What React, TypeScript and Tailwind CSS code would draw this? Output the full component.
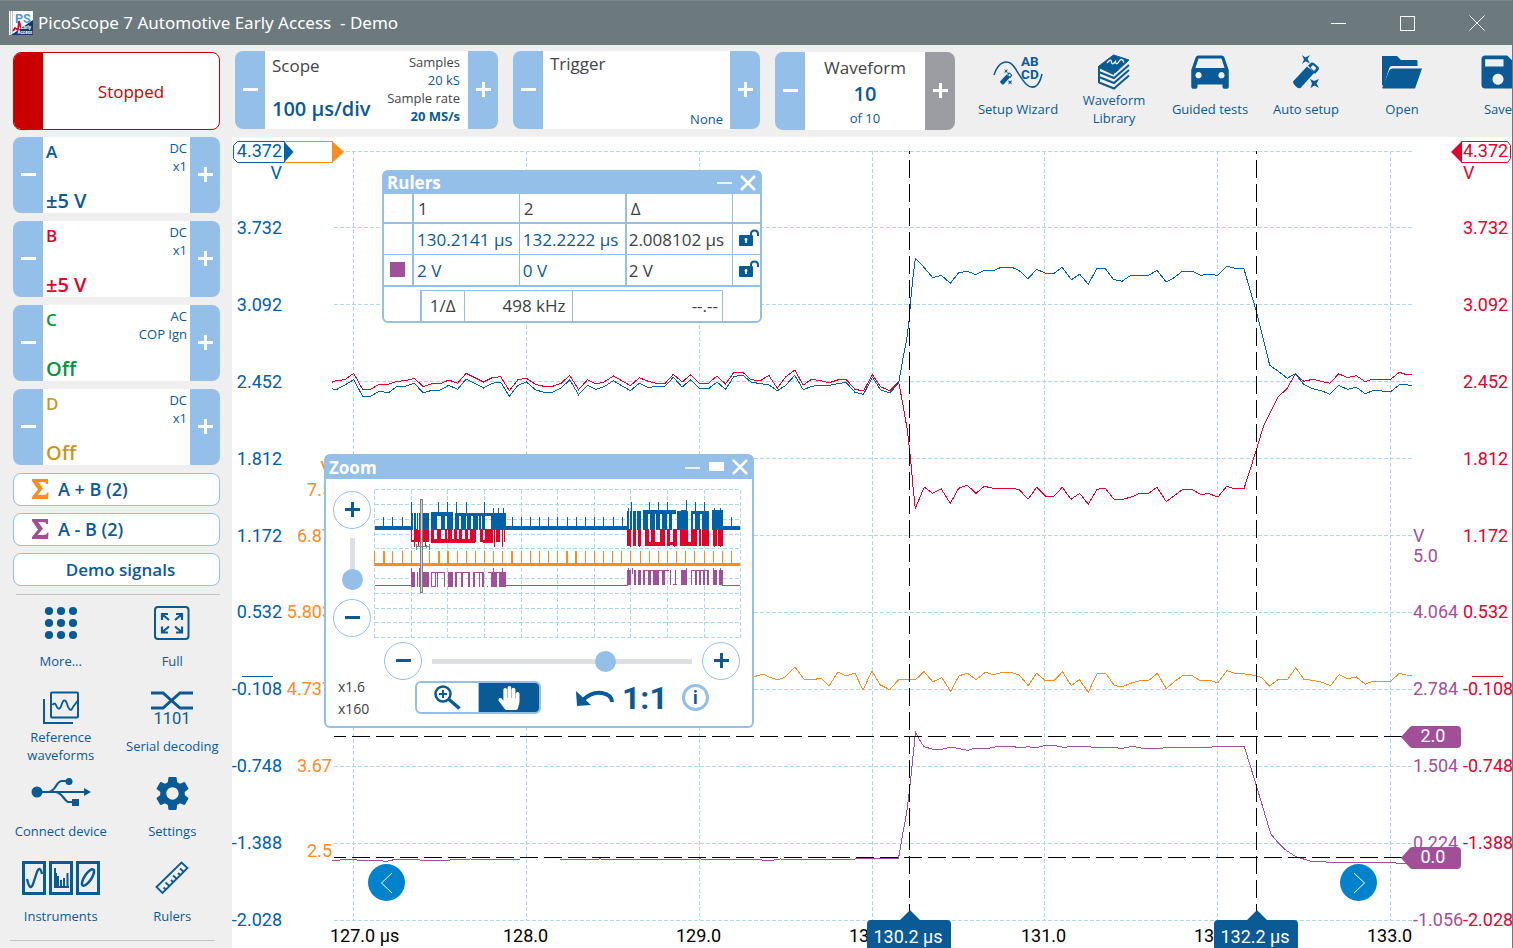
import React from "react";
import { MdDirectionsCar, MdSave, MdSettings } from "react-icons/md";
import { FaHandPaper } from "react-icons/fa";

type Pt = [number, number];

const parse = (s: string): Pt[] => s.trim().split(/\s+/).map((p) => p.split(",").map(Number) as Pt);

/** Converts raw samples to chart coordinates. */
const plot = (s: string, ox: number, oy: number, sx: number, sy: number) =>
  parse(s)
    .map(([x, y]) => `${(ox + x / sx).toFixed(1)},${(oy + y / sy).toFixed(1)}`)
    .join(" ");

const redTrace = [
  plot(
    "5,67 16,62 40,59 64,40 88,88 110,88 133,73 158,73 180,64 205,62 228,55 252,80 275,71 298,71 321,60 345,70 368,40 392,53 415,66 438,53 461,50 485,92 508,59 531,55 555,73 578,79 602,79 625,70 648,46 672,89 696,59 719,72 741,66 766,48 790,63 812,77 836,53 860,64 883,70 905,71 928,43 952,66 975,44 999,70 1023,70 1046,48 1069,72 1092,37 1116,37 1138,59 1163,62 1186,46 1209,85 1232,50 1256,30 1279,75 1302,58 1326,62 1350,68 1372,60 1395,58 1419,88 1442,93 1466,44 1488,80 1513,92 1537,66",
    330, 360, 2.703, 3,
  ),
  plot(
    "68,520 82,600 92,690 99,770 106,835 133,771 158,790 184,777 211,820 236,775 262,766 288,790 313,769 340,775 396,775 418,779 444,808 470,772 497,799 522,799 547,772 573,808 599,790 625,823 651,778 676,775 702,808 728,808 754,801 780,790 806,790 831,772 859,815 884,796 908,778 935,778 962,793 987,791 1014,801 1040,769 1065,777 1092,776 1110,720 1129,660 1150,590 1170,548 1195,500 1222,475 1246,431",
    880, 230, 3, 3,
  ),
  plot(
    "191,124 218,118 244,124 270,130 296,101 322,113 349,107 376,125 397,118 452,118 478,97 500,104 516,104",
    1240, 340, 3, 3,
  ),
].join(" ");

const blueTrace = [
  plot(
    "5,86 17,89 40,75 64,59 88,109 110,109 133,94 158,98 180,80 205,78 228,70 252,99 275,91 298,90 321,76 345,88 368,57 392,70 415,84 438,70 461,66 485,109 508,76 531,66 555,89 578,97 602,97 625,84 648,59 672,104 696,76 719,88 741,80 766,62 790,78 812,92 836,70 860,83 883,79 905,79 928,52 952,81 975,59 999,86 1023,86 1046,66 1069,88 1092,49 1116,46 1138,66 1163,71 1186,74 1209,92 1232,76 1256,46 1279,89 1302,79 1326,76 1350,76 1372,71 1395,67 1419,97 1442,103 1466,52 1488,89 1513,99 1537,70",
    330, 360, 2.703, 3,
  ),
  plot(
    "68,390 80,330 88,265 92,210 98,150 106,85 132,112 158,143 184,136 211,160 236,128 262,124 288,134 312,121 342,121 364,112 396,112 418,122 444,146 470,118 497,130 522,130 546,112 574,149 599,133 625,163 651,115 675,115 700,148 726,154 752,136 806,136 831,121 859,156 884,142 906,124 937,124 962,136 987,133 1014,136 1040,109 1065,115 1092,117 1113,190 1129,243 1148,320 1169,406 1195,424 1222,445 1246,431",
    880, 230, 3, 3,
  ),
  plot(
    "191,133 218,146 244,152 270,163 296,136 322,148 349,142 376,161 401,151 452,155 480,133 516,136",
    1240, 340, 3, 3,
  ),
].join(" ");

const orangeTrace = [
  "740,681 750,678 763,674 769,677 778,680 785,677 795,667 804,679 812,680 821,678 829,686 838,672 846,676 855,673 863,690 872,671",
  plot(
    "0,134 24,149 46,119 88,119 109,95 131,125 153,113 175,154 196,107 217,100 238,119 261,97 281,104 303,97 325,97 346,106 367,137 388,100 410,122 431,122 452,95 474,137 494,119 516,157 538,100 559,100 581,137 600,140 625,128 645,122 665,122 687,100 709,146 730,124 751,106 772,106 793,122 815,121 837,128 859,92 880,100 900,101 932,107 945,113 965,138 987,118 1010,118 1030,83 1050,118 1072,121 1095,127 1116,137 1137,104 1158,116 1180,111 1202,133 1220,124 1265,124 1286,100 1304,105 1318,106",
    880, 640, 2.477, 3,
  ),
].join(" ");

const purpleTrace = [
  "332,860 337,861 343,859 357,860 373,860 383,861 388,861 397,859 420,860 430,861 470,859 520,860 560,860 600,859 650,860 700,859 762,860 768,861 780,859 840,860 870,858",
  plot(
    "0,654 46,654 55,590 66,520 73,450 80,370 88,277 98,300 109,320 131,328 153,328 175,321 196,326 217,331 238,324 260,327 295,319 325,319 346,323 367,320 385,323 408,317 435,317 455,322 480,319 505,319 540,323 580,323 600,325 625,319 650,325 700,325 705,322 820,322 828,319 902,319 933,440 968,582 985,607 1005,630 1030,650 1068,664 1100,664 1108,667 1170,667 1180,669 1190,667 1270,667 1280,670 1320,669",
    880, 640, 2.477, 3,
  ),
].join(" ");

const gridX = [353.5, 526.5, 699.5, 872.5, 1044.5, 1217.5, 1390.5];
const gridY = [151.5, 227.5, 304.5, 381.5, 458.5, 535.5, 612.5, 689.5, 766.5, 843.5, 920.5];
const baseline = (row: number) => 157 + Math.round(76.9 * row);
const volts = ["3.732", "3.092", "2.452", "1.812", "1.172", "0.532", "-0.108", "-0.748", "-1.388", "-2.028"];
const times = ["127.0 µs", "128.0", "129.0", "130.0", "131.0", "132.0", "133.0"];
const orangeLabels: [string, number][] = [
  ["V", 474], ["7.5", 496], ["6.87", 542], ["5.803", 618], ["4.737", 695], ["3.67", 772], ["2.5", 857],
];
const purpleLabels: [string, number][] = [
  ["V", 542], ["5.0", 562], ["4.064", 618], ["2.784", 695], ["1.504", 772], ["0.224", 849], ["-1.056", 926],
];

function ScopeChart() {
  return (
    <svg
      className="absolute inset-0 h-full w-full font-[Roboto,sans-serif] text-[18px]"
      viewBox="232 137 1280 811"
      preserveAspectRatio="xMinYMin meet"
      role="img"
      aria-label="Scope traces"
    >
      <g stroke="#add8e6" strokeDasharray="4 2" fill="none" shapeRendering="crispEdges">
        {gridX.map((x) => (
          <line key={x} x1={x} x2={x} y1={151} y2={920} />
        ))}
        {gridY.map((y) => (
          <line key={y} x1={334} x2={1412} y1={y} y2={y} />
        ))}
      </g>

      <g fill="none" strokeWidth="1" shapeRendering="crispEdges">
        <polyline points={redTrace} stroke="#e4002b" />
        <polyline points={blueTrace} stroke="#0060a8" />
        <polyline points={orangeTrace} stroke="#ff8a1e" />
        <polyline points={purpleTrace} stroke="#a24f9a" />
      </g>

      <g stroke="#000" strokeDasharray="18 6" shapeRendering="crispEdges">
        <line x1={909.5} x2={909.5} y1={151} y2={912} strokeDashoffset={15} />
        <line x1={1256.5} x2={1256.5} y1={151} y2={912} strokeDashoffset={15} />
        <line x1={334} x2={1404} y1={736.5} y2={736.5} strokeDashoffset={6} />
        <line x1={334} x2={1404} y1={857.5} y2={857.5} strokeDashoffset={6} />
      </g>

      <g fill="#0060a8" textAnchor="end">
        {volts.map((v, i) => (
          <text key={v} x={282} y={baseline(i + 1)}>{v}</text>
        ))}
        <text x={282} y={179}>V</text>
      </g>
      <g fill="#ff8a1e" textAnchor="end">
        {orangeLabels.map(([t, y]) => (
          <text key={t} x={332} y={y}>{t}</text>
        ))}
      </g>
      <g fill="#e4002b">
        {volts.map((v, i) => (
          <text key={v} x={1463} y={baseline(i + 1)}>{v}</text>
        ))}
        <text x={1463} y={179}>V</text>
      </g>
      <g fill="#a24f9a">
        {purpleLabels.map(([t, y]) => (
          <text key={t} x={1413} y={y}>{t}</text>
        ))}
      </g>
      <g fill="#000">
        {times.map((t, i) => (
          <text key={t} x={Math.floor(gridX[i]) - 23} y={942}>{t}</text>
        ))}
      </g>

      <path d="M242 676.5h31" stroke="#0060a8" />
      <path d="M1472 676.5h31" stroke="#e4002b" />

      <path d="M285.500 141.500h47v21h-47l-2-5v-11z" fill="#fff" stroke="#ff8a1e" />
      <path d="M332 141l12 11-12 11z" fill="#ff8a1e" />
      <path d="M237.500 141.500h47v21h-47l-4-4v-13z" fill="#fff" stroke="#0060a8" />
      <path d="M284 141.500l9.500 10.500-9.500 10.500z" fill="#0060a8" />
      <text x={282} y={157} fill="#0060a8" textAnchor="end">4.372</text>
      <path d="M1461.500 141.500h46l3 4v13l-3 4h-46z" fill="#fff" stroke="#e4002b" />
      <path d="M1462 141l-11 11 11 11z" fill="#e4002b" />
      <text x={1463} y={157} fill="#e4002b">4.372</text>

      {[
        { y: 737, t: "2.0" },
        { y: 858, t: "0.0" },
      ].map(({ y, t }) => (
        <g key={t}>
          <path d={`M1401 ${y}l9-10q1-1 2-1h45q4 0 4 4v14q0 4-4 4h-45q-1 0-2-1z`} fill="#a24f9a" />
          <text x={1433} y={y + 5} fill="#fff" textAnchor="middle">{t}</text>
        </g>
      ))}
      {[
        { x: 909, t: "130.2 µs" },
        { x: 1256, t: "132.2 µs" },
      ].map(({ x, t }) => (
        <g key={t}>
          <path d={`M${x + 1} 910l10 10h27q4 0 4 4v24h-84v-24q0-4 4-4h29z`} fill="#0a5a96" />
          <text x={x - 1} y={943} fill="#fff" textAnchor="middle">{t}</text>
        </g>
      ))}
    </svg>
  );
}

/* ---------- zoom overview ---------- */

const bars = (s: string, y1: number, y2: number) =>
  parse(s)
    .map(([a, b]) => `M${a} ${y1}H${b}V${y2}H${a}Z`)
    .join("");
const spikes = (xs: number[], y1: number, y2: number) => xs.map((x) => `M${x - 1.5} ${y1}h3V${y2}h-3z`).join("");

const burst1 =
  "274,278 281,288 291,294 297,300 310,328 334,350 362,375 380,399 404,418 423,438 441,454 459,473 477,482 487,496 513,557";
const burst2 =
  "922,927 930,936 940,948 952,964 970,985 990,1004 1008,1019 1026,1042 1046,1056 1072,1104 1113,1120 1126,1140 1145,1167 1177,1208";
const red1 =
  "274,277 286,293 298,301 310,328 333,342 352,364 374,380 384,396 402,410 418,425 436,444 450,467 480,490 496,518 528,540 552,556";
const red2 =
  "922,932 940,948 954,964 975,986 992,1006 1020,1034 1042,1050 1060,1072 1080,1104 1112,1130 1137,1142 1146,1167 1178,1190 1194,1208";
const purple1 =
  "274,286 290,294 298,300 310,328 334,337 346,349 352,355 372,375 385,398 404,410 422,428 444,450 460,464 476,480 486,491 514,532 536,557";
const purple2 =
  "922,934 942,948 954,964 970,974 984,992 998,1018 1026,1036 1050,1054 1064,1068 1084,1102 1112,1116 1124,1130 1138,1142 1150,1154 1162,1167 1178,1190 1196,1208";
const lowSpikes = [190, 217, 246, 576, 603, 631, 658, 686, 713, 742, 770, 797, 824, 851, 880, 906, 1234];
const orangeSpikes = Array.from({ length: 40 }, (_, i) => 164 + i * 27.45);

function Overview() {
  return (
    <svg className="block h-[150px] w-[368px]" viewBox="162 116 1104 450" role="img" aria-label="Capture overview" shapeRendering="crispEdges">
      <g stroke="#add8e6" strokeWidth="3" strokeDasharray="12 6" fill="none">
        {Array.from({ length: 11 }, (_, i) => (
          <path key={i} d={`M${164 + i * 109.8} 118V562M164 ${118 + i * 44.4}H1262`} />
        ))}
      </g>
      <g fill="#e4002b">
        <path d="M190 237h74v3h-74zM560 237h340v3H560zM1210 237h50v3h-50z" />
        <path d={bars(red1, 236, 276) + bars(red2, 236, 286)} />
        <path d="M277 268h13v8h-13zM333 267h132v12H333zM490 268h28v9h-28zM974 275h60v11h-60zM1040 274h32v11h-32zM1080 275h52v12h-52zM1146 275h20v11h-20z" />
        <path d={spikes([282, 296, 316, 524, 548, 930, 958, 1062, 1182, 1200], 240, 291)} />
      </g>
      <g fill="#0060a8">
        <path d="M165 227h112v11H165zM556 227h368v11H556zM1206 227h54v11h-54z" />
        <path d={bars(burst1, 188, 240) + bars(burst2, 182, 238)} />
        <path d="M333 186h65v11h-65zM405 188h115v9H405zM968 180h100v12H968zM1082 180h20v12h-20zM1112 182h54v9h-54zM1177 180h31v12h-31z" />
        <path d={spikes(lowSpikes, 199, 230)} />
        <path d={spikes([275, 356, 382, 410, 438, 493, 935, 989, 1015, 1043, 1127, 1153], 156, 190)} />
        <path d={spikes([1100], 148, 190) + spikes([520, 536, 550, 925, 1182, 1200], 174, 190)} />
      </g>
      <g fill="#ff8a1e">
        <path d="M163 337h1097v11H163z" />
        <path d={spikes(orangeSpikes, 303, 340)} />
        <path d={spikes([192, 358, 384, 576, 741, 768, 961], 303, 340)} />
      </g>
      <g fill="#a24f9a">
        <path d="M165 405h112v3H165zM556 405h368v3H556zM1206 405h54v3h-54z" />
        <path d={bars(purple1, 366, 410) + bars(purple2, 360, 404)} />
        <path d="M334 366h40v3h-40zM404 366h44v3h-44zM460 366h30v3h-30zM504 366h32v3h-32zM968 359h80v4h-80zM1084 360h18v3h-18zM1112 360h54v3h-54zM334 407h15v3h-15zM500 407h5v3h-5zM1060 401h10v3h-10z" />
        <path d={spikes([275, 298, 520, 548, 924, 936, 1100, 1180, 1200], 352, 370)} />
      </g>
      <g fill="none" stroke="#7f7f7f" strokeWidth="3">
        <rect x="302" y="146" width="6" height="281" fill="#d9d9d9" />
        <path d="M290 281v17M328 281v17M290 289h38M318 285v8" />
      </g>
    </svg>
  );
}

/* ---------- small parts ---------- */

function Sign({ plus = false }: { plus?: boolean }) {
  return (
    <svg width="16" height="16" viewBox="0 0 16 16" stroke="currentColor" strokeWidth="3" aria-hidden="true">
      <path d={plus ? "M1 7.500h15M8.500 0v15" : "M1 7.500h15"} />
    </svg>
  );
}

function StepButton({ plus = false, label, className = "" }: { plus?: boolean; label: string; className?: string }) {
  return (
    <button
      type="button"
      aria-label={label}
      className={`flex w-[30px] shrink-0 items-center justify-center text-white ${plus ? "rounded-r-lg" : "rounded-l-lg"} ${className || "bg-[#94bfe9]"}`}
    >
      <Sign plus={plus} />
    </button>
  );
}

function Channel(p: { name: string; range: string; coupling: string; probe: string; color: string }) {
  return (
    <section className="flex h-[76px]">
      <StepButton label={`Decrease ${p.name} range`} />
      <button type="button" className="flex min-w-0 flex-1 justify-between bg-white pr-[3px] pl-[3px] text-left">
        <span className={`flex h-full flex-col justify-between font-semibold ${p.color}`}>
          <span className="pt-[3px] text-[17px] leading-6">{p.name}</span>
          <span className="text-[20px] leading-6">{p.range}</span>
        </span>
        <span className="pt-[2px] text-right text-[13px] leading-[18px]">
          <span className="block">{p.coupling}</span>
          <span className="block">{p.probe}</span>
        </span>
      </button>
      <StepButton plus label={`Increase ${p.name} range`} />
    </section>
  );
}

function MathButton({ sigma, children }: { sigma?: string; children: React.ReactNode }) {
  return (
    <button
      type="button"
      className={`flex h-[33px] items-center rounded-lg border border-[#94bfe9] bg-white leading-6 font-semibold ${sigma ? "pb-px pl-[17px] text-[18px]" : "justify-center pl-2 text-[17px]"}`}
    >
      {sigma && (
        <svg width="18" height="20" viewBox="0 0 18 20" className={`mr-[9px] ${sigma}`} fill="currentColor" aria-hidden="true">
          <path d="M1 0h16v5h-1.500q-.5-2-3-2H7l5 6.500L6.500 16h6q3 0 4-2.500H17.500L17 20H1v-2l6-7.500L1 2z" />
        </svg>
      )}
      <span>{children}</span>
    </button>
  );
}

function SideTool({ icon, children }: { icon: React.ReactNode; children: React.ReactNode }) {
  return (
    <button type="button" className="flex h-[85px] flex-col items-center text-[13px] leading-[18px]">
      <span className="flex h-[34px] items-center justify-center">{icon}</span>
      <span className="flex min-h-[42px] items-center text-center">{children}</span>
    </button>
  );
}

function TopTool({ icon, children }: { icon: React.ReactNode; children: React.ReactNode }) {
  return (
    <button type="button" className="flex w-24 shrink-0 flex-col items-center pt-[9px] text-[13px] leading-[18px]">
      <span className="flex h-[35px] items-center justify-center">{icon}</span>
      <span className="flex h-[40px] items-center text-center">{children}</span>
    </button>
  );
}

/* ---------- icons ---------- */

function AppLogo() {
  return (
    <svg width="24" height="24" viewBox="0 0 24 24" aria-hidden="true" fontFamily="Roboto, sans-serif" fontWeight="700">
      <path d="M0 0h24v24H0z" fill="#fff" />
      <path d="M1.500 0v24M3.500 0v24" stroke="#b9c3c8" strokeWidth="1" />
      <path d="M24 9v15H2z" fill="#123a63" />
      <path d="M4 20l2-3 3 2 1-9 2 7" stroke="#e4002b" strokeWidth="1.800" fill="none" />
      <text x="6" y="11.500" fontSize="12.500" fill="#4a9ad4">PS</text>
      <text x="12" y="18" fontSize="4.500" fill="#fff">Early</text>
      <text x="8.500" y="22.500" fontSize="4.500" fill="#fff">Access</text>
    </svg>
  );
}

const Wand = () => (
  <>
    <path d="M0 26.500L14 11.500l7.500 6L7.500 33Q5 34 2.500 31Q0 29 0 26.500z" />
    <path d="M15 10.500L18.500 7.500Q20 7 21.500 8.500L25.500 12Q26.500 13.500 25.500 15L22 19z" />
    <path d="M17.500 12.500l2.500-2.500 3.500 3-2.500 3z" fill="#efefef" />
    <path d="M9 0l3.500 2.500L17 0l-2.500 4L17 8.500l-4.500-2.200L9 9l2-4.500z" />
    <path d="M17 24l4 2 5-2-2.500 4.500 2.500 4.500-4.500-2.500L17.500 33l1.500-4.500z" />
  </>
);

const SetupWizardIcon = () => (
  <svg width="50" height="36" viewBox="0 0 50 36" aria-hidden="true" fill="currentColor">
    <path d="M1 21C5 8 15 3 22 14S35 37 43 32Q47 29 49 20" fill="none" stroke="currentColor" strokeWidth="1.500" />
    <g transform="translate(7 15) scale(.47)"><Wand /></g>
    <g fontFamily="Roboto, sans-serif" fontWeight="700" fontSize="13.500">
      <text x="28" y="12">A</text>
      <text x="37" y="12">B</text>
      <text x="28" y="24.500">C</text>
      <text x="37" y="24.500">D</text>
    </g>
  </svg>
);

const LibraryIcon = () => (
  <svg width="32" height="36" viewBox="0 0 32 36" aria-hidden="true">
    <path d="M1 12L15.500 1 31 6 17 19z" fill="currentColor" stroke="currentColor" />
    <path d="M1 12v17M1 18l15 6L31 11M1 23l15 6L31 16M1 28.500l15 6L31 21.500M16 20L1 13" fill="none" stroke="currentColor" strokeWidth="2" />
    <path d="M9 9q4-5 4.500-1t4-.5q.5 4.500 3.500 0t5 1" fill="none" stroke="#efefef" strokeWidth="1.300" />
  </svg>
);

const FolderIcon = () => (
  <svg width="42" height="34" viewBox="0 0 42 34" aria-hidden="true" fill="currentColor">
    <path d="M1 1h15l4 4h15.500q1 0 1 1v5H11q-2 0-2.700 2L2.500 31 1 30z" />
    <path d="M11.500 13.500H41L34 33.500H2q-1 0-.7-1L8 16q.8-2.500 3.500-2.500z" />
  </svg>
);

const DotsIcon = () => (
  <svg width="34" height="34" viewBox="0 0 34 34" aria-hidden="true" fill="currentColor">
    {[5, 17, 29].map((y) => [5, 17, 29].map((x) => <circle key={`${x}-${y}`} cx={x} cy={y} r="4.100" />))}
  </svg>
);

const FullIcon = () => (
  <svg width="36" height="34" viewBox="0 0 36 34" aria-hidden="true" fill="none" stroke="currentColor" strokeWidth="2">
    <rect x="1" y="1" width="33.500" height="32" rx="3" />
    <path d="M8 14V8h6M8.500 8.500l6.500 5.500M22 8h6v6M27.500 8.500L21 14M8 20.500v6h6M8.500 26l6.500-5.500M22 26.500h6v-6M27.500 26L21 20.500" strokeWidth="2.200" />
  </svg>
);

const ReferenceIcon = () => (
  <svg width="36" height="34" viewBox="0 0 36 34" aria-hidden="true" fill="none" stroke="currentColor" strokeWidth="2">
    <rect x="8" y="1.500" width="27" height="25" rx="1" />
    <path d="M1 8v24h29" />
    <path d="M9.500 14q2-3 3.500 0c2 5 4 5 5.500 0s3.500-7 5.500-1 4 8 6 3l4.500-6" strokeWidth="1.800" />
  </svg>
);

const SerialIcon = () => (
  <svg width="44" height="38" viewBox="0 -2 44 38" aria-hidden="true" fill="currentColor">
    <path d="M1 2h12l17 15h13M1 17h12L30 2h13" fill="none" stroke="currentColor" strokeWidth="3" />
    <text x="22" y="32.500" textAnchor="middle" fontFamily="Roboto, sans-serif" fontSize="16.500">1101</text>
  </svg>
);

const UsbIcon = () => (
  <svg width="60" height="32" viewBox="0 0 60 32" aria-hidden="true" fill="currentColor">
    <path d="M6 15h49M18 15Q22 14 25 9t6-5h6M24 15q4 0 8 5t5 5h5" fill="none" stroke="currentColor" strokeWidth="2.200" />
    <circle cx="6" cy="15" r="5.500" />
    <circle cx="38" cy="4.500" r="3.500" />
    <path d="M41 22h7v7h-7zM53 11l7 4-7 4z" />
  </svg>
);

const InstrumentsIcon = () => (
  <svg width="78" height="34" viewBox="0 0 78 34" aria-hidden="true" fill="none" stroke="currentColor">
    <path d="M1.500 1.500h21v31h-21zM28.500 1.500h21v31h-21zM55.500 1.500h21v31h-21z" strokeWidth="3" />
    <path d="M5 18q3 13 6 5l4-12q3-7 5 2" strokeWidth="2.300" />
    <path d="M33 7v19h14M36 26V15M39 26V19M42 26v-9M45.500 26V12M34 26V12" strokeWidth="2" />
    <ellipse cx="66" cy="16.500" rx="3.500" ry="9.500" transform="rotate(34 66 16.500)" strokeWidth="2.500" />
  </svg>
);

const RulersIcon = () => (
  <svg width="34" height="34" viewBox="0 0 34 34" aria-hidden="true" fill="none" stroke="currentColor" strokeWidth="1.800">
    <path d="M1.500 26L26.500 1.500l6 5.500L7.500 32z" />
    <path d="M11 28.500l-2.500-2M14.500 25l-4-3.500M18.500 21.500l-2.500-2.500M22 18l-4-3.500M25.500 14.500L23 12M29 11l-4-3.500" />
  </svg>
);

const UnlockIcon = () => (
  <svg width="20" height="17" viewBox="0 0 20 17" aria-hidden="true">
    <path d="M12 8V5q0-3.500 3.500-3.500T19 5v2" fill="none" stroke="currentColor" strokeWidth="2" />
    <rect x="0" y="6" width="14" height="11" rx="1" fill="currentColor" />
    <path d="M7 9a1.500 1.500 0 01.8 2.700V14H6.200v-2.300A1.500 1.500 0 017 9z" fill="#fff" />
  </svg>
);

const CloseIcon = () => (
  <svg width="16" height="16" viewBox="0 0 16 16" stroke="currentColor" strokeWidth="2.500" aria-hidden="true">
    <path d="M1 1l14 14M15 1L1 15" />
  </svg>
);

/* ---------- floating windows ---------- */

function RulersWindow() {
  const blue = "border-[#94bfe9]";
  return (
    <section aria-label="Rulers" className="absolute top-[33px] left-[150px] w-[380px] rounded-md border-2 border-[#94bfe9] bg-white text-[17px] leading-6 text-[#3c4043]">
      <header className="flex h-[22px] items-center bg-[#94bfe9] pr-1 pl-[3px] text-white">
        <h2 className="flex-1 text-[17px] leading-5 font-bold">Rulers</h2>
        <button type="button" aria-label="Minimise rulers" className="mr-2 w-[15px] border-t-2 border-white/80" />
        <button type="button" aria-label="Close rulers"><CloseIcon /></button>
      </header>
      <table className="w-full table-fixed border-collapse">
        <colgroup>
          <col className="w-[29px]" /><col /><col /><col /><col className="w-[28px]" />
        </colgroup>
        <thead>
          <tr className={`h-[29px] border-b-2 ${blue}`}>
            <td />
            <th scope="col" className={`border-x-2 border-r ${blue} pt-0.5 pl-1 text-left font-normal`}>1</th>
            <th scope="col" className={`border-r-2 ${blue} pt-0.5 pl-1 text-left font-normal`}>2</th>
            <th scope="col" className={`border-r ${blue} pt-0.5 pl-1 text-left font-normal`}>Δ</th>
            <td />
          </tr>
        </thead>
        <tbody>
          {[
            ["", "130.2141 µs", "132.2222 µs", "2.008102 µs"],
            ["V", "2 V", "0 V", "2 V"],
          ].map(([kind, a, b, d]) => (
            <tr key={a} className={`whitespace-nowrap ${kind ? "h-8 border-b-2" : "h-[31px] border-b"} ${blue}`}>
              <td>{kind && <span className="ml-[6px] block size-[15px] bg-[#a24f9a]" />}</td>
              <td className={`border-x-2 border-r ${blue} pt-0.5 pl-[3px] text-[#0a5a96]`}>{a}</td>
              <td className={`border-r-2 ${blue} pt-0.5 pl-[3px] text-[#0a5a96]`}>{b}</td>
              <td className={`border-r ${blue} pt-0.5 pl-[2px]`}>{d}</td>
              <td>
                <button type="button" aria-label="Lock rulers" className="mb-0.5 ml-[6px] block text-[#0a5a96]"><UnlockIcon /></button>
              </td>
            </tr>
          ))}
        </tbody>
      </table>
      <table className="mt-[3px] ml-[36px] w-[303px] table-fixed border-collapse">
        <tbody>
          <tr className={`h-[30px] border-x border-t ${blue}`}>
            <th scope="row" className={`w-[43px] border-r border-l-2 ${blue} font-normal`}>1/Δ</th>
            <td className={`w-[108px] border-r ${blue} pr-1.5 text-right`}>498 kHz</td>
            <td className="pr-1 text-right">--.--</td>
          </tr>
        </tbody>
      </table>
    </section>
  );
}

function RoundButton({ plus = false, label }: { plus?: boolean; label: string }) {
  return (
    <button
      type="button"
      aria-label={label}
      className="flex size-[38px] shrink-0 items-center justify-center rounded-full border border-[#94bfe9] bg-white text-[#0a5a96]"
    >
      <Sign plus={plus} />
    </button>
  );
}

const thumb =
  "[&::-webkit-slider-thumb]:size-[21px] [&::-webkit-slider-thumb]:appearance-none [&::-webkit-slider-thumb]:rounded-full [&::-webkit-slider-thumb]:bg-[#94bfe9]";

function ZoomWindow() {
  return (
    <section aria-label="Zoom" className="absolute top-[317px] left-[92px] w-[430px] rounded-md border-2 border-[#94bfe9] bg-white text-[#0a5a96]">
      <header className="flex h-[23px] items-center bg-[#94bfe9] pr-1 pl-[3px] text-white">
        <h2 className="flex-1 text-[17px] leading-5 font-bold">Zoom</h2>
        <button type="button" aria-label="Minimise zoom" className="mr-[9px] w-[15px] border-t-2 border-white/80" />
        <button type="button" aria-label="Restore zoom" className="mr-2 mb-0.5 h-[9px] w-[15px] bg-white" />
        <button type="button" aria-label="Close zoom" className="mb-0.5"><CloseIcon /></button>
      </header>
      <div className="flex gap-[3px] pt-[10px] pl-[7px]">
        <div className="flex w-[38px] shrink-0 flex-col items-center gap-[9px] pt-0.5">
          <RoundButton plus label="Zoom in vertically" />
          <input
            type="range"
            aria-label="Vertical zoom"
            defaultValue={0}
            className={`h-[52px] w-[21px] appearance-none bg-transparent [direction:rtl] [writing-mode:vertical-lr] [&::-webkit-slider-runnable-track]:w-[5px] [&::-webkit-slider-runnable-track]:bg-[#dcdfe4] [&::-webkit-slider-thumb]:-ml-2 ${thumb}`}
          />
          <RoundButton label="Zoom out vertically" />
        </div>
        <Overview />
      </div>
      <div className="mt-[3px] ml-[58px] flex w-[356px] items-center gap-[10px]">
        <RoundButton label="Zoom out horizontally" />
        <input
          type="range"
          aria-label="Horizontal zoom"
          defaultValue={68}
          className={`h-[21px] min-w-0 flex-1 appearance-none bg-transparent [&::-webkit-slider-runnable-track]:h-[5px] [&::-webkit-slider-runnable-track]:bg-[#dcdfe4] [&::-webkit-slider-thumb]:-mt-2 ${thumb}`}
        />
        <RoundButton plus label="Zoom in horizontally" />
      </div>
      <div className="flex h-[35px] items-center pl-3">
        <div className="w-[77px] text-[14px] leading-[22px] text-[#3c4043]">
          <div>x1.6</div>
          <div>x160</div>
        </div>
        <div className="flex h-[33px] w-[126px] overflow-hidden rounded-md border-2 border-[#94bfe9]">
          <button type="button" aria-label="Zoom tool" className="flex flex-1 items-center justify-center border-r border-[#94bfe9]">
            <svg width="28" height="26" viewBox="0 0 28 26" fill="none" stroke="currentColor" aria-hidden="true">
              <circle cx="10" cy="9" r="7.500" strokeWidth="2.500" />
              <path d="M10 5v8M6 9h8" strokeWidth="2" />
              <path d="M15.500 14l11 9.500" strokeWidth="3.500" />
            </svg>
          </button>
          <button type="button" aria-label="Pan tool" className="flex flex-1 items-center justify-center bg-[#0a5a96] text-white">
            <FaHandPaper size={24} />
          </button>
        </div>
        <button type="button" aria-label="Undo zoom" className="ml-[34px]">
          <svg width="39" height="22" viewBox="0 0 39 22" aria-hidden="true">
            <path d="M8 13Q17 4 27 6t10 9" fill="none" stroke="currentColor" strokeWidth="4" />
            <path d="M1 4l1 15 14-1z" fill="currentColor" />
          </svg>
        </button>
        <button type="button" aria-label="Reset zoom to 1:1" className="ml-2 font-[Roboto,sans-serif] text-[32px] leading-8 font-bold">1:1</button>
        <button
          type="button"
          aria-label="Zoom information"
          className="ml-[14px] flex size-[27px] items-center justify-center rounded-full border-[3px] border-[#94bfe9] text-[17px] leading-none font-bold"
        >
          i
        </button>
      </div>
      <div className="h-[11px]" />
    </section>
  );
}

/* ---------- page ---------- */

export default function App() {
  return (
    <div className="flex h-screen flex-col overflow-hidden border-r border-[#6c7a7e] bg-[#efefef] font-['Open_Sans','Noto_Sans',sans-serif] text-[#0a5a96]">
      <header className="flex h-[45px] shrink-0 items-center border-t border-[#7b888c] bg-[#6c7a7e] pl-[9px] text-white">
        <AppLogo />
        <h1 className="ml-[5px] flex-1 font-['Noto_Sans','Open_Sans',sans-serif] text-[17px] whitespace-pre">{"PicoScope 7 Automotive Early Access  - Demo"}</h1>
        <div className="flex items-center gap-[54px] pr-[27px]">
          <button type="button" aria-label="Minimise" className="w-[15px] border-t border-white" />
          <button type="button" aria-label="Maximise" className="size-[15px] border border-white" />
          <button type="button" aria-label="Close">
            <svg width="16" height="16" viewBox="0 0 16 16" stroke="currentColor" aria-hidden="true">
              <path d="M.5.5l15 15M15.500.5l-15 15" />
            </svg>
          </button>
        </div>
      </header>

      <div className="flex min-h-0 flex-1">
        <aside className="flex w-[232px] shrink-0 flex-col pt-[7px] pr-3 pl-[13px]">
          <button type="button" className="flex h-[78px] overflow-hidden rounded-lg border border-[#c80000] bg-white text-[17px] text-[#c80000]">
            <span className="h-full w-[29px] bg-[#c80000]" />
            <span className="flex-1 self-center pt-0.5">Stopped</span>
          </button>
          <div className="mt-[7px] flex flex-col gap-2">
            <Channel name="A" range="±5 V" coupling="DC" probe="x1" color="text-[#0a5a96]" />
            <Channel name="B" range="±5 V" coupling="DC" probe="x1" color="text-[#e4002b]" />
            <Channel name="C" range="Off" coupling="AC" probe="COP Ign" color="text-[#009640]" />
            <Channel name="D" range="Off" coupling="DC" probe="x1" color="text-[#c49a24]" />
          </div>
          <div className="mt-2 flex flex-col gap-[7px]">
            <MathButton sigma="text-[#ff8a1e]">A + B (2)</MathButton>
            <MathButton sigma="text-[#a24f9a]">A - B (2)</MathButton>
            <MathButton>Demo signals</MathButton>
          </div>
          <hr className="mt-2 ml-[3px] border-[#c4c4c4]" />
          <nav aria-label="Tools" className="mt-[11px] -mr-2 -ml-2 grid grid-cols-2">
            <SideTool icon={<DotsIcon />}>More...</SideTool>
            <SideTool icon={<FullIcon />}>Full</SideTool>
            <SideTool icon={<ReferenceIcon />}>Reference<br />waveforms</SideTool>
            <SideTool icon={<SerialIcon />}>Serial decoding</SideTool>
            <SideTool icon={<UsbIcon />}>Connect device</SideTool>
            <SideTool icon={<MdSettings size={41} />}>Settings</SideTool>
            <SideTool icon={<InstrumentsIcon />}>Instruments</SideTool>
            <SideTool icon={<RulersIcon />}>Rulers</SideTool>
          </nav>
          <hr className="-mt-1.5 mr-[5px] -ml-[3px] border-[#c4c4c4]" />
        </aside>

        <div className="flex min-w-0 flex-1 flex-col">
          <div className="flex h-[92px] shrink-0 overflow-hidden pl-[3px]">
            <section className="mt-[6px] flex h-[78px] w-[263px] shrink-0">
              <StepButton label="Decrease timebase" />
              <button type="button" className="flex flex-1 justify-between bg-white pr-2 pl-[7px]">
                <span className="flex h-full flex-col justify-between pt-[3px] pb-2 text-left">
                  <span className="text-[17px] leading-6 text-[#444]">Scope</span>
                  <span className="text-[20px] leading-6 font-semibold whitespace-nowrap">100 µs/div</span>
                </span>
                <span className="pt-[2px] text-right text-[13px] leading-[18px] whitespace-nowrap">
                  <span className="block text-[#444]">Samples</span>
                  <span className="block">20 kS</span>
                  <span className="block text-[#444]">Sample rate</span>
                  <span className="block font-bold">20 MS/s</span>
                </span>
              </button>
              <StepButton plus label="Increase timebase" />
            </section>
            <section className="mt-[6px] ml-[15px] flex h-[78px] w-[247px] shrink-0">
              <StepButton label="Previous trigger" />
              <button type="button" className="flex flex-1 justify-between bg-white pt-[1px] pr-[7px] pb-px pl-[7px]">
                <span className="self-start text-[17px] leading-6 text-[#444]">Trigger</span>
                <span className="self-end text-[13px] leading-[18px]">None</span>
              </button>
              <StepButton plus label="Next trigger" />
            </section>
            <section className="mt-[7px] ml-[15px] flex h-[78px] w-[180px] shrink-0">
              <StepButton label="Previous waveform" />
              <button type="button" className="flex flex-1 flex-col items-center bg-white pt-1">
                <span className="text-[17px] leading-6 text-[#444]">Waveform</span>
                <span className="text-[20px] leading-7 font-semibold">10</span>
                <span className="text-[13px] leading-5">of 10</span>
              </button>
              <StepButton plus label="Next waveform" className="bg-[#9c9da3]" />
            </section>
            <nav aria-label="Actions" className="ml-[15px] flex">
              <TopTool icon={<SetupWizardIcon />}>Setup Wizard</TopTool>
              <TopTool icon={<LibraryIcon />}>Waveform<br />Library</TopTool>
              <TopTool icon={<MdDirectionsCar size={50} className="mb-1" />}>Guided tests</TopTool>
              <TopTool icon={<svg width="27" height="34" viewBox="0 0 27 34" fill="currentColor" aria-hidden="true"><Wand /></svg>}>Auto setup</TopTool>
              <TopTool icon={<FolderIcon />}>Open</TopTool>
              <TopTool icon={<MdSave size={44} />}>Save</TopTool>
            </nav>
          </div>

          <main className="relative min-h-0 flex-1 overflow-hidden bg-white">
            <ScopeChart />
            <RulersWindow />
            <ZoomWindow />
            <button type="button" aria-label="Scroll left" className="absolute bottom-[47px] left-[136px] flex size-[37px] items-center justify-center rounded-full bg-[#0083cc] text-white">
              <svg width="14" height="22" viewBox="0 0 14 22" fill="none" stroke="currentColor" aria-hidden="true"><path d="M12 1L1.500 11 12 21" /></svg>
            </button>
            <button type="button" aria-label="Scroll right" className="absolute right-[135px] bottom-[47px] flex size-[37px] items-center justify-center rounded-full bg-[#0083cc] text-white">
              <svg width="14" height="22" viewBox="0 0 14 22" fill="none" stroke="currentColor" aria-hidden="true"><path d="M2 1l10.500 10L2 21" /></svg>
            </button>
          </main>
        </div>
      </div>
    </div>
  );
}
